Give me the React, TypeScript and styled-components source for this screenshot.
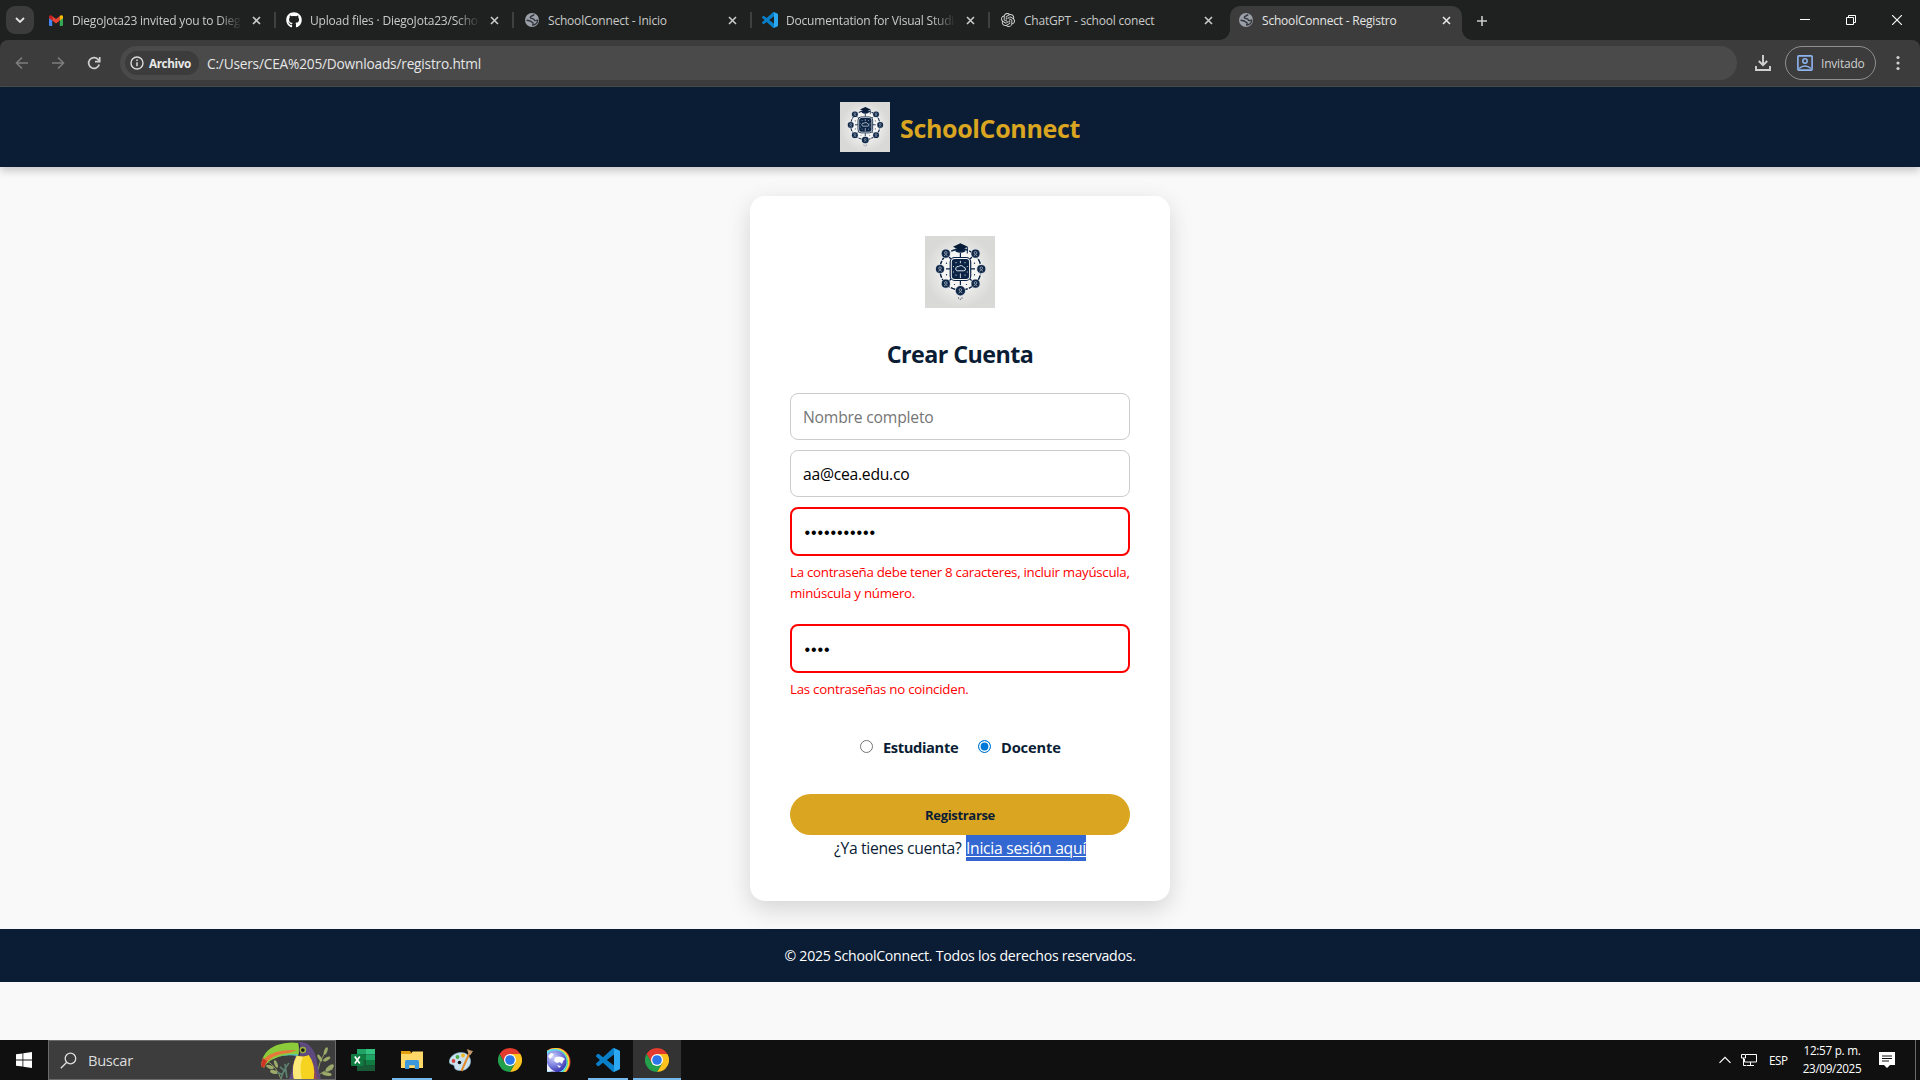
import React from "react";
import styled, { createGlobalStyle, css } from "styled-components";
import { FaGithub } from "react-icons/fa";
import { SiOpenai } from "react-icons/si";

const ui = `"Open Sans", "Noto Sans", sans-serif`;
const navy = "#0a1d35";
const gold = "#daa520";

const GlobalStyle = createGlobalStyle`
  * { box-sizing: border-box; }
  html, body { margin: 0; padding: 0; overflow: hidden; }
  body { font-family: ${ui}; background: #f9f9f9; }
`;

const Screen = styled.div`
  width: 1920px;
  height: 1080px;
  display: flex;
  flex-direction: column;
  overflow: hidden;
  background: #f9f9f9;
`;

const Txt = styled.span<{ $ls?: number }>`
  display: block;
  white-space: nowrap;
  letter-spacing: ${(p) => p.$ls ?? 0}px;
`;

/* ---------- browser chrome ---------- */
const TabStrip = styled.div`
  flex: none;
  height: 40px;
  display: flex;
  align-items: flex-start;
  background: #1f2120;
  padding-left: 6px;
`;
const TabSearch = styled.div`
  width: 28px;
  height: 28px;
  margin-top: 6px;
  border-radius: 9px;
  background: #3c3c3c;
  display: flex;
  align-items: center;
  justify-content: center;
`;
const Tabs = styled.div`
  display: flex;
  margin-left: 6px;
`;
const Tab = styled.div<{ $active?: boolean; $line?: boolean }>`
  position: relative;
  width: ${(p) => (p.$active ? 232 : 238)}px;
  height: 34px;
  margin-top: 6px;
  padding-left: 8px;
  padding-bottom: 6px;
  display: flex;
  align-items: center;
  font-size: 12px;
  color: #c9cac9;
  ${(p) =>
    p.$line &&
    css`
      &::after {
        content: "";
        position: absolute;
        right: 2px;
        top: 6px;
        width: 2px;
        height: 16px;
        background: #3f403f;
      }
    `}
  ${(p) =>
    p.$active &&
    css`
      background: #3c3c3c;
      border-radius: 10px 10px 0 0;
      color: #e6e6e6;
      &::before,
      &::after {
        content: "";
        position: absolute;
        bottom: 0;
        width: 10px;
        height: 10px;
      }
      &::before {
        left: -10px;
        background: radial-gradient(circle at 0 0, transparent 9.5px, #3c3c3c 10px);
      }
      &::after {
        right: -10px;
        background: radial-gradient(circle at 100% 0, transparent 9.5px, #3c3c3c 10px);
      }
    `}
`;
const Favicon = styled.div`
  width: 16px;
  height: 16px;
  display: flex;
  align-items: center;
  justify-content: center;
`;
const TabTitle = styled.div<{ $fade?: boolean }>`
  margin-left: 8px;
  width: 168px;
  line-height: 18px;
  padding-top: 1px;
  ${(p) =>
    p.$fade &&
    css`
      mask-image: linear-gradient(90deg, #000 146px, transparent 170px);
    `}
`;
const CloseX = styled.div`
  margin-left: 8px;
  width: 16px;
  height: 16px;
  display: flex;
  align-items: center;
  justify-content: center;
`;
const NewTab = styled.div`
  margin: 12px 0 0 12px;
  width: 16px;
  height: 16px;
`;
const WinButtons = styled.div`
  margin-left: auto;
  display: flex;
  height: 40px;
`;
const WinButton = styled.div`
  width: 46px;
  height: 40px;
  display: flex;
  align-items: center;
  justify-content: center;
`;
const ToolbarWrap = styled.div`
  flex: none;
  height: 47px;
  background: #1f2120;
`;
const Toolbar = styled.div`
  height: 47px;
  background: #3c3c3c;
  border-radius: 8px 8px 0 0;
  border-bottom: 1px solid #4c4c4c;
  padding: 0 12px 0 12px;
  display: flex;
  align-items: center;
`;
const NavIcons = styled.div`
  display: flex;
  gap: 16px;
  width: 108px;
  svg { display: block; }
`;
const Omnibox = styled.div`
  width: 1617px;
  height: 34px;
  border-radius: 17px;
  background: #4a4a4a;
  display: flex;
  align-items: center;
  padding-left: 5px;
`;
const Chip = styled.div`
  width: 74px;
  height: 24px;
  border-radius: 12px;
  background: #3c3c3c;
  color: #e8e8e8;
  display: flex;
  align-items: center;
  gap: 5px;
  padding-left: 5px;
  font-size: 11.7px;
  font-weight: 700;
`;
const Url = styled.div`
  margin-left: 8px;
  font-size: 13.7px;
  color: #e6e6e6;
`;
const ToolbarRight = styled.div`
  display: flex;
  align-items: center;
  margin-left: 17px;
`;
const Profile = styled.div`
  margin-left: 13px;
  width: 91px;
  height: 34px;
  border-radius: 17px;
  border: 1px solid #909090;
  display: flex;
  align-items: center;
  padding-left: 11px;
  gap: 8px;
  font-size: 12px;
  color: #cfcfcf;
`;
const Menu = styled.div`
  margin-left: 14px;
  width: 16px;
  height: 16px;
  svg { display: block; }
`;

/* ---------- page ---------- */
const Page = styled.div`
  height: 953px;
  flex: none;
  background: #f9f9f9;
  color: ${navy};
`;
const Header = styled.header`
  position: relative;
  height: 80px;
  background: ${navy};
  display: flex;
  align-items: center;
  justify-content: center;
  gap: 10px;
  box-shadow: 0 4px 8px rgba(0, 0, 0, 0.2);
  svg { display: block; }
`;
const Brand = styled.div`
  width: 180px;
  padding-top: 2px;
  font-size: 25px;
  font-weight: 700;
  color: ${gold};
`;
const Main = styled.main`
  display: flex;
  justify-content: center;
  padding: 29px 0 28px;
`;
const Card = styled.section`
  width: 420px;
  height: 705px;
  border-radius: 15px;
  background: #fff;
  padding: 40px;
  box-shadow: 0 8px 25px rgba(0, 0, 0, 0.15);
  display: flex;
  flex-direction: column;
  svg { display: block; }
`;
const LogoRow = styled.div`
  display: flex;
  justify-content: center;
`;
const Heading = styled.h2`
  margin: 29px 0 1px;
  height: 34px;
  line-height: 34px;
  font-size: 23.3px;
  font-weight: 700;
  display: flex;
  justify-content: center;
`;
const Field = styled.div<{ $error?: boolean; $top: number }>`
  flex: none;
  margin-top: ${(p) => p.$top}px;
  height: ${(p) => (p.$error ? 49 : 47)}px;
  border: ${(p) => (p.$error ? "2px solid #f00" : "1px solid #ccc")};
  border-radius: 8px;
  padding: 0 12px;
  display: flex;
  align-items: center;
  font-size: 15.7px;
  color: #000;
`;
const Placeholder = styled.div`
  color: #757575;
`;
const Dots = styled.div`
  padding: 2px 0 0 0.6px;
  font-family: "Liberation Sans", sans-serif;
  font-size: 16px;
  letter-spacing: 0.9px;
`;
const ErrorText = styled.div`
  margin-top: 6px;
  font-size: 13.3px;
  line-height: 21px;
  color: #f00;
`;
const Roles = styled.div`
  display: flex;
  margin: 34px 0 2px;
  padding-left: 70px;
  height: 24px;
  align-items: center;
  font-size: 14.7px;
  font-weight: 700;
`;
const Role = styled.label<{ $w: number }>`
  display: flex;
  align-items: center;
  gap: 10px;
  width: ${(p) => p.$w}px;
`;
const RoleName = styled(Txt)`
  padding-top: 2px;
`;
const Radio = styled.span<{ $on?: boolean }>`
  width: 13px;
  height: 13px;
  border-radius: 50%;
  border: 1px solid ${(p) => (p.$on ? "#0078d7" : "#767676")};
  background: ${(p) => (p.$on ? "#0078d7" : "#fff")};
  box-shadow: ${(p) => (p.$on ? "inset 0 0 0 1.6px #fff" : "none")};
`;
const Submit = styled.button`
  flex: none;
  margin: 34px 0 0;
  height: 41px;
  border: 0;
  border-radius: 25px;
  background: ${gold};
  color: ${navy};
  font: 700 13px ${ui};
  display: flex;
  align-items: center;
  justify-content: center;
`;
const SignIn = styled.p`
  margin: 0;
  padding-left: 44px;
  display: flex;
  height: 26px;
  line-height: 26px;
  font-size: 15.7px;
`;
const Selected = styled.a`
  display: block;
  flex: none;
  width: 120px;
  margin-left: auto;
  margin-right: 44px;
  height: 26px;
  background: #3367d1;
  color: #fff;
  text-decoration: underline;
  text-decoration-thickness: 1px;
  text-underline-offset: 2px;
`;
const Footer = styled.footer`
  height: 53px;
  background: ${navy};
  color: #fff;
  display: flex;
  align-items: center;
  justify-content: center;
  font-size: 14.1px;
`;

/* ---------- taskbar ---------- */
const Taskbar = styled.div`
  height: 40px;
  flex: none;
  background: #101010;
  display: flex;
  svg { display: block; }
`;
const Start = styled.div`
  width: 48px;
  display: flex;
  align-items: center;
  justify-content: center;
`;
const Search = styled.div`
  width: 288px;
  height: 40px;
  background: #3d3d3d;
  border: 1px solid #6a6a6a;
  display: flex;
  align-items: center;
  padding-left: 11px;
  font-size: 14.7px;
  color: #dcdcdc;
`;
const SearchLabel = styled.div`
  margin-left: 11px;
  width: 174px;
`;
const Apps = styled.div`
  display: flex;
  margin-left: 3px;
  gap: 1px;
`;
const AppButton = styled.div<{ $open?: boolean; $focus?: boolean }>`
  width: 48px;
  height: 40px;
  display: flex;
  align-items: center;
  justify-content: center;
  background: ${(p) =>
    p.$focus
      ? "linear-gradient(#76b9ed,#76b9ed) bottom / 48px 2px no-repeat #333"
      : p.$open
      ? "linear-gradient(#76b9ed,#76b9ed) bottom / 40px 2px no-repeat"
      : "none"};
`;
const Tray = styled.div`
  margin-left: auto;
  display: flex;
  align-items: center;
  color: #fff;
  font-size: 11.7px;
`;
const NetIcon = styled.svg`
  margin-left: 10px;
`;
const NoteIcon = styled.svg`
  margin-left: 18px;
`;
const Lang = styled.div`
  margin-left: 12px;
  width: 34px;
`;
const Clock = styled.div`
  width: 58px;
  line-height: 18px;
  margin-top: -2px;
  display: flex;
  flex-direction: column;
  align-items: center;
`;
const ShowDesktop = styled.div`
  margin-left: 20px;
  width: 5px;
  height: 40px;
  border-left: 1px solid #6a6a6a;
`;

/* ---------- drawings ---------- */
const Earth = () => (
  <svg width="14" height="14" viewBox="0 0 14 14">
    <circle cx="7" cy="7" r="7" fill="#9aa0a8" />
    <path
      d="M9.300 1.800c-1.200.2-1.400.9-2.500 1.200S4.800 4.200 5.600 5s2.400.4 3.100 1.100.4 1.300 1.400 1.500 1.600-.6 2.600-.4c0 1.500-.8 3-2.200 4-.9.5-2 .9-2.800.9.2-1 .5-1.300.3-2.100S6.600 9.200 6 8.500 4 7.600 1.500 7.300"
      fill="none"
      stroke="#33363a"
      strokeWidth="1.400"
    />
  </svg>
);
const Gmail = () => (
  <svg width="14" height="11" viewBox="0 0 14 11">
    <path d="M0 2v8a1 1 0 0 0 1 1h2.200V4z" fill="#4285f4" />
    <path d="M14 2v8a1 1 0 0 1-1 1h-2.200V4z" fill="#34a853" />
    <path d="M3.200 1v4.500L7 8.400l3.800-2.900V1L7 3.900z" fill="#ea4335" />
    <path d="M0 1.600v1.600l3.200 2.400V1L2.500.5C1.500-.3 0 .4 0 1.600z" fill="#c5221f" />
    <path d="M14 1.600v1.600l-3.200 2.400V1l.7-.5C12.500-.3 14 .4 14 1.600z" fill="#fbbc04" />
  </svg>
);
const VSCODE =
  "M23.15 2.587L18.21.21a1.494 1.494 0 0 0-1.705.29l-9.46 8.63-4.12-3.128a.999.999 0 0 0-1.276.057L.327 7.261A1 1 0 0 0 .326 8.74L3.899 12 .326 15.26a1 1 0 0 0 .001 1.479L1.65 17.94a.999.999 0 0 0 1.276.057l4.12-3.128 9.46 8.63a1.492 1.492 0 0 0 1.704.29l4.942-2.377A1.5 1.5 0 0 0 24 20.06V3.939a1.5 1.5 0 0 0-.85-1.352zm-5.146 14.861L10.826 12l7.178-5.448v10.896z";
const VsCode = ({ size, id }: { size: number; id: string }) => (
  <svg width={size} height={size} viewBox="0 0 24 24">
    <clipPath id={id}>
      <rect x="18" y="0" width="6" height="24" />
    </clipPath>
    <path d={VSCODE} fill="#0a7fc9" />
    <path d={VSCODE} fill="#2aa8f2" clipPath={`url(#${id})`} />
  </svg>
);
const Cross = ({ c = "#c9cac9" }) => (
  <svg width="9" height="9" viewBox="0 0 9 9">
    <path d="M1 1l7 7M8 1l-7 7" stroke={c} strokeWidth="1.600" />
  </svg>
);
const Chrome = () => (
  <svg width="24" height="24" viewBox="0 0 48 48">
    <path d="M24 0A24 24 0 0 0 3.200 12L13.600 30 24 12h20.800A24 24 0 0 0 24 0z" fill="#e33b2e" />
    <path d="M44.800 12H24l10.400 18L24 48A24 24 0 0 0 44.800 12z" fill="#fcc31e" />
    <path d="M3.200 12A24 24 0 0 0 24 48l10.400-18H13.600z" fill="#22a04b" />
    <circle cx="24" cy="24" r="12" fill="#fff" />
    <circle cx="24" cy="24" r="9.600" fill="#2b76e8" />
  </svg>
);

const nodes: [number, number, number][] = [
  [15, 33, 4.1],
  [56.300, 33, 4.1],
  [20.800, 17.600, 4.1],
  [50.500, 17.600, 4.1],
  [20.800, 47.700, 4.1],
  [50.500, 47.700, 4.1],
  [35.400, 54.700, 4.700],
];
const Emblem = ({ w, h, id }: { w: number; h: number; id: string }) => (
  <svg width={w} height={h} viewBox="0 0 70 72" preserveAspectRatio="none">
    <defs>
      <radialGradient id={id}>
        <stop offset="0" stopColor="#f3f3f2" />
        <stop offset=".6" stopColor="#e8e8e7" />
        <stop offset="1" stopColor="#d9d9d8" />
      </radialGradient>
    </defs>
    <rect width="70" height="72" fill={`url(#${id})`} />
    <circle cx="35.500" cy="33.500" r="22.300" fill="#f5f5f4" />
    <g fill="none" stroke="#0b2344">
      <circle cx="35.500" cy="33.500" r="20.600" strokeWidth="1.500" strokeDasharray="5 1.200" />
      <rect x="25.200" y="21.500" width="20.500" height="23" rx="4.500" strokeWidth="1.200" />
      <path d="M21 32.800h4M46 32.800h4M35.400 17v4M35.400 45v4M24 21l2 2M47 21l-2 2M24 45l2-2M47 45l-2-2" strokeWidth="1.200" />
    </g>
    <rect x="26.800" y="23" width="17.300" height="20" rx="3" fill="#0b2344" />
    <path d="M32.200 34.800h6.600a1.700 1.700 0 0 0 0-3.400 3.200 3.200 0 0 0-5.200-.8 2.100 2.100 0 0 0-1.400 4.200z" fill="none" stroke="#dfe5ec" strokeWidth="1" />
    <path d="M31 26v1.200M35.400 24.800v2.400M40 26v1.200M31 38.500v1.200M35.400 37.500v4.500M40 38.500v1.200M28.500 30v1M42.300 30v1M28.500 35.500v1M42.300 35.500v1" stroke="#c9d1dc" strokeWidth="1" />
    <path d="M21.500 26.500v1.500M49.500 26.500v1.500M21.500 38v1.500M49.500 38v1.500M29.500 48v1M41.500 48v1M33.500 61.500v1M37 61.500v1M35.300 62.800v1" stroke="#31435f" strokeWidth="1.100" />
    {nodes.map(([x, y, r]) => (
      <g key={`${x}-${y}`}>
        <circle cx={x} cy={y} r={r + 0.7} fill="#cfd4db" />
        <circle cx={x} cy={y} r={r} fill="#0f2747" />
        <circle cx={x} cy={y - 0.8} r={1.300} fill="none" stroke="#aab5c4" strokeWidth=".8" />
        <path d={`M${x - 1.800} ${y + 2.300}q1.800-2.600 3.600 0`} fill="none" stroke="#aab5c4" strokeWidth=".8" />
      </g>
    ))}
    <path d="M30.500 12.500v3q4.900 2.500 9.800 0v-3z" fill="#0b2344" />
    <path d="M28 10.800l7.400-3.600 7.500 3.600-7.500 3.600z" fill="#081c38" />
    <path d="M42.300 11v6.500" stroke="#0b2344" strokeWidth="1" />
  </svg>
);
const Toucan = () => (
  <svg width="74" height="38" viewBox="0 0 74 38">
    <g fill="none" stroke="#8f9f5f" strokeWidth="1">
      <path d="M6 20q10 6 14 18M72 28q-12 2-18 10M66 8q-8 12-10 26" />
    </g>
    <g fill="#9cab6a">
      <ellipse cx="9" cy="26" rx="4" ry="1.800" transform="rotate(20 9 26)" />
      <ellipse cx="13" cy="31" rx="4" ry="1.800" transform="rotate(15 13 31)" />
      <ellipse cx="15" cy="23" rx="4" ry="1.600" transform="rotate(70 15 23)" />
      <ellipse cx="65" cy="10" rx="4" ry="1.600" transform="rotate(-70 65 10)" />
      <ellipse cx="59" cy="17" rx="4" ry="1.600" transform="rotate(60 59 17)" />
      <ellipse cx="66" cy="18" rx="4" ry="1.600" transform="rotate(-30 66 18)" />
      <ellipse cx="69" cy="27" rx="5" ry="2.200" transform="rotate(-40 69 27)" />
      <ellipse cx="66" cy="33" rx="5" ry="1.800" transform="rotate(10 66 33)" />
    </g>
    <path d="M20 38q2-8 8-16M26 37q-1-8-2-14M19 26l6 5M16 31l6 3" stroke="#5d8271" strokeWidth="1.600" fill="none" />
    <path d="M38 1q8-1 13 6 5 8 6 18l3 13H28q3-6 4-14z" fill="#5f4a80" />
    <path d="M52 20l5 18h-9z" fill="#8a4a5c" />
    <path d="M36 14q6 3 12 0 7 10 5 24H33q-3-12 3-24z" fill="#f6d321" />
    <path d="M36 15q-6 11-3 23h8q-3-12 1-22z" fill="#fbe878" />
    <path d="M0 25Q1 10 16 4 27 0 38 2v12Q24 13 15 17 6 20 3 27z" fill="#8ccb3a" />
    <path d="M4 17Q14 8 36 9l-8 3Q14 13 8 19L3 24z" fill="#e8763c" />
    <path d="M12 18q12-6 25-5v2q-13-2-23 2z" fill="#5cc5b5" />
    <path d="M0 25q0-4 2-8l4 3-3 7z" fill="#cf3527" />
    <path d="M38 2q2 7 0 13" stroke="#2a2440" strokeWidth="1.200" fill="none" />
    <circle cx="42" cy="9" r="3.300" fill="#9db838" />
    <circle cx="42" cy="9" r="1.900" fill="#1c1c1c" />
  </svg>
);
const Excel = () => (
  <svg width="24" height="22" viewBox="0 0 24 22">
    <path d="M6 0h9v5.500H6z" fill="#21a366" />
    <path d="M15 0h9v5.500h-9z" fill="#33c481" />
    <path d="M6 5.500h9V11H6z" fill="#107c41" />
    <path d="M15 5.500h9V11h-9z" fill="#21a366" />
    <path d="M6 11h9v5.500H6zM6 16.500h18V22H6z" fill="#185c37" />
    <path d="M15 11h9v5.500h-9z" fill="#107c41" />
    <rect y="5" width="12.500" height="12" rx="1" fill="#107c41" />
    <path d="M3.800 7.600l5 6.800M8.800 7.600l-5 6.800" stroke="#fff" strokeWidth="1.700" />
  </svg>
);
const Explorer = () => (
  <svg width="22" height="20" viewBox="0 0 22 20">
    <path d="M0 1h9l1.500 2H22v5H0z" fill="#e2a00f" />
    <path d="M0 4h10l1.500-2.500H22V18H0z" fill="#ffd868" />
    <path d="M4 11.500a1.500 1.500 0 0 1 1.500-1.500h11a1.500 1.500 0 0 1 1.500 1.500V19h-4.200v-3.800H8.200V19H4z" fill="#3d97dc" />
  </svg>
);
const Paint = () => (
  <svg width="24" height="24" viewBox="0 0 24 24">
    <path d="M12 4.500C5 4.500 0 10 .300 14c.3 3 3.500 2 4.700 3.500S4 22 11 22.500s11-5 10.500-10S17 4.500 12 4.500z" fill="#c8e2f0" stroke="#8db8d0" strokeWidth=".6" />
    <circle cx="4.500" cy="13" r="1.900" fill="#d9463b" />
    <circle cx="8.500" cy="9" r="1.900" fill="#4dab4a" />
    <circle cx="14" cy="7.500" r="1.900" fill="#f2b822" />
    <circle cx="10.500" cy="14.500" r="1.800" fill="#101010" />
    <path d="M12.500 23L20 6" stroke="#e08a2b" strokeWidth="2" />
    <path d="M19.500 6.500L18 1l3.500 1.500L24 3l-2.500 4z" fill="#c79a6b" />
  </svg>
);
const Globe3D = () => (
  <svg width="24" height="24" viewBox="0 0 24 24">
    <defs>
      <clipPath id="globeBox"><rect width="24" height="24" /></clipPath>
      <radialGradient id="globeSea" cx=".4" cy=".3" r=".75">
        <stop offset="0" stopColor="#cfd2f8" />
        <stop offset=".5" stopColor="#7f83e0" />
        <stop offset="1" stopColor="#2b27a8" />
      </radialGradient>
    </defs>
    <g clipPath="url(#globeBox)">
      <circle cx="9" cy="14" r="14.500" fill="#e2392d" />
      <circle cx="8.500" cy="14" r="14" fill="#f2e03a" />
      <circle cx="8" cy="14" r="13" fill="#58d69a" />
      <circle cx="7" cy="14" r="13" fill="#5fdcf0" />
      <circle cx="8.500" cy="13.500" r="11" fill="url(#globeSea)" />
      <path d="M8 9.500l3-1 4 .5 3 2-2 2-1 3-2-2-3 1-3-2zM1 8l3-3 3 1-2 3-2 2z" fill="#fff" />
      <path d="M10 17l4 1-2 2zM0 15q3 7 9 8.500H0z" fill="#eceefd" />
    </g>
  </svg>
);

const tabs = [
  { t: "DiegoJota23 invited you to Dieg", i: <Gmail />, fade: true },
  { t: "Upload files · DiegoJota23/Scho", i: <FaGithub size={16} color="#fff" />, fade: true },
  { t: "SchoolConnect - Inicio", i: <Earth /> },
  { t: "Documentation for Visual Studi", i: <VsCode size={16} id="vsTab" />, fade: true },
  { t: "ChatGPT - school conect", i: <SiOpenai size={14} color="#d6d6d6" /> },
  { t: "SchoolConnect - Registro", i: <Earth />, active: true },
];

export default function App() {
  return (
    <Screen>
      <GlobalStyle />
      <TabStrip>
        <TabSearch>
          <svg width="10" height="6" viewBox="0 0 10 6"><path d="M1 1l4 4 4-4" fill="none" stroke="#e3e3e3" strokeWidth="1.800" /></svg>
        </TabSearch>
        <Tabs>
          {tabs.map((t, i) => (
            <Tab key={t.t} $active={t.active} $line={i < 4}>
              <Favicon>{t.i}</Favicon>
              <TabTitle $fade={t.fade}><Txt $ls={-0.2}>{t.t}</Txt></TabTitle>
              <CloseX><Cross c={t.active ? "#e6e6e6" : "#c9cac9"} /></CloseX>
            </Tab>
          ))}
        </Tabs>
        <NewTab>
          <svg width="16" height="16" viewBox="0 0 16 16"><path d="M8 3v10M3 8h10" stroke="#c9cac9" strokeWidth="1.600" /></svg>
        </NewTab>
        <WinButtons>
          <WinButton><svg width="10" height="10" viewBox="0 0 10 10"><path d="M0 4.500h10" stroke="#fff" /></svg></WinButton>
          <WinButton><svg width="10" height="10" viewBox="0 0 10 10"><path d="M.5 2.500h7v7h-7zM2.500 2.500v-2h7v7h-2" fill="none" stroke="#fff" /></svg></WinButton>
          <WinButton><svg width="10" height="10" viewBox="0 0 10 10"><path d="M0 0l10 10M10 0L0 10" stroke="#fff" strokeWidth="1.100" /></svg></WinButton>
        </WinButtons>
      </TabStrip>
      <ToolbarWrap>
        <Toolbar>
          <NavIcons>
            <svg width="20" height="20" viewBox="0 0 20 20"><path d="M16 10H5M10 4.500L4.500 10l5.500 5.500" fill="none" stroke="#7d7d7d" strokeWidth="1.600" /></svg>
            <svg width="20" height="20" viewBox="0 0 20 20"><path d="M4 10h11M10 4.500l5.500 5.500-5.500 5.500" fill="none" stroke="#7d7d7d" strokeWidth="1.600" /></svg>
            <svg width="20" height="20" viewBox="0 0 20 20"><path d="M15.200 11.500A5.400 5.400 0 1 1 14 6.300L15.500 8" fill="none" stroke="#d0d0d0" strokeWidth="1.700" /><path d="M15.700 4v4.700H11" fill="none" stroke="#d0d0d0" strokeWidth="1.700" /></svg>
          </NavIcons>
          <Omnibox>
            <Chip>
              <svg width="14" height="14" viewBox="0 0 14 14"><circle cx="7" cy="7" r="6" fill="none" stroke="#dcdcdc" strokeWidth="1.400" /><path d="M7 6.200v4M7 3.600v1.500" stroke="#dcdcdc" strokeWidth="1.500" /></svg>
              <Txt $ls={-0.38}>Archivo</Txt>
            </Chip>
            <Url><Txt $ls={-0.2}>C:/Users/CEA%205/Downloads/registro.html</Txt></Url>
          </Omnibox>
          <ToolbarRight>
            <svg width="18" height="18" viewBox="0 0 18 18"><path d="M9 1v10M4.800 7L9 11.200 13.200 7M2 12v4h14v-4" fill="none" stroke="#d0d0d0" strokeWidth="1.900" /></svg>
            <Profile>
              <svg width="16" height="16" viewBox="0 0 16 16"><rect x=".9" y=".9" width="14.200" height="14.200" rx=".8" fill="none" stroke="#8fb4f0" strokeWidth="1.600" /><circle cx="8" cy="6" r="2.200" fill="none" stroke="#8fb4f0" strokeWidth="1.500" /><path d="M2 13.500q6-5 12 0" fill="none" stroke="#8fb4f0" strokeWidth="1.500" /></svg>
              <Txt $ls={-0.2}>Invitado</Txt>
            </Profile>
            <Menu>
              <svg width="16" height="16" viewBox="0 0 16 16" fill="#d0d0d0"><circle cx="8" cy="2.500" r="1.600" /><circle cx="8" cy="8" r="1.600" /><circle cx="8" cy="13.500" r="1.600" /></svg>
            </Menu>
          </ToolbarRight>
        </Toolbar>
      </ToolbarWrap>

      <Page>
        <Header>
          <Emblem w={50} h={50} id="emblemSmall" />
          <Brand><Txt $ls={-0.34}>SchoolConnect</Txt></Brand>
        </Header>
        <Main>
          <Card>
            <LogoRow><Emblem w={70} h={72} id="emblemBig" /></LogoRow>
            <Heading><Txt $ls={-0.56}>Crear Cuenta</Txt></Heading>
            <Field $top={21}><Placeholder><Txt $ls={-0.2}>Nombre completo</Txt></Placeholder></Field>
            <Field $top={10}><Txt $ls={-0.26}>aa@cea.edu.co</Txt></Field>
            <Field $top={10} $error><Dots>•••••••••••</Dots></Field>
            <ErrorText>
              <Txt $ls={-0.28}>La contraseña debe tener 8 caracteres, incluir mayúscula,</Txt>
              <Txt $ls={-0.27}>minúscula y número.</Txt>
            </ErrorText>
            <Field $top={20} $error><Dots>••••</Dots></Field>
            <ErrorText><Txt $ls={-0.25}>Las contraseñas no coinciden.</Txt></ErrorText>
            <Roles>
              <Role $w={118}><Radio /><RoleName $ls={-0.37}>Estudiante</RoleName></Role>
              <Role $w={90}><Radio $on /><RoleName $ls={-0.18}>Docente</RoleName></Role>
            </Roles>
            <Submit><Txt $ls={-0.32}>Registrarse</Txt></Submit>
            <SignIn>
              <Txt $ls={-0.33}>¿Ya tienes cuenta?</Txt>
              <Selected><Txt $ls={-0.28}>Inicia sesión aquí</Txt></Selected>
            </SignIn>
          </Card>
        </Main>
        <Footer><Txt $ls={-0.24}>© 2025 SchoolConnect. Todos los derechos reservados.</Txt></Footer>
      </Page>

      <Taskbar>
        <Start>
          <svg width="16" height="16" viewBox="0 0 16 16" fill="#fff"><path d="M0 2.300L6.500 1.400v6.200H0zM7.300 1.300L16 0v7.600H7.300zM0 8.400h6.500v6.200L0 13.700zM7.300 8.400H16V16l-8.700-1.300z" /></svg>
        </Start>
        <Search>
          <svg width="17" height="17" viewBox="0 0 17 17"><circle cx="10.500" cy="6.500" r="5.300" fill="none" stroke="#e0e0e0" strokeWidth="1.300" /><path d="M6.800 10.200L.8 16.200" stroke="#e0e0e0" strokeWidth="1.300" /></svg>
          <SearchLabel><Txt $ls={-0.3}>Buscar</Txt></SearchLabel>
          <Toucan />
        </Search>
        <Apps>
          <AppButton><Excel /></AppButton>
          <AppButton $open><Explorer /></AppButton>
          <AppButton><Paint /></AppButton>
          <AppButton><Chrome /></AppButton>
          <AppButton><Globe3D /></AppButton>
          <AppButton $open><VsCode size={24} id="vsBar" /></AppButton>
          <AppButton $focus><Chrome /></AppButton>
        </Apps>
        <Tray>
          <svg width="12" height="8" viewBox="0 0 12 8"><path d="M.5 6.800L6 1.300l5.500 5.500" fill="none" stroke="#fff" strokeWidth="1.200" /></svg>
          <NetIcon width="16" height="14" viewBox="0 0 16 14"><path d="M5 1.500h10.500v7.500H3.500V6M.5 1.500h4v3.500h-4zM2.500 5v7.500h3M9.500 9v3.500M6 12.500h7" fill="none" stroke="#fff" /></NetIcon>
          <Lang><Txt $ls={-0.5}>ESP</Txt></Lang>
          <Clock><Txt $ls={-0.27}>12:57 p. m.</Txt><Txt $ls={-0.36}>23/09/2025</Txt></Clock>
          <NoteIcon width="16" height="16" viewBox="0 0 16 16"><path d="M0 0h16v13h-5l-3 3-3-3H0z" fill="#fff" /><path d="M3 4h10M3 6.500h10M3 9h7" stroke="#101010" /></NoteIcon>
          <ShowDesktop />
        </Tray>
      </Taskbar>
    </Screen>
  );
}
